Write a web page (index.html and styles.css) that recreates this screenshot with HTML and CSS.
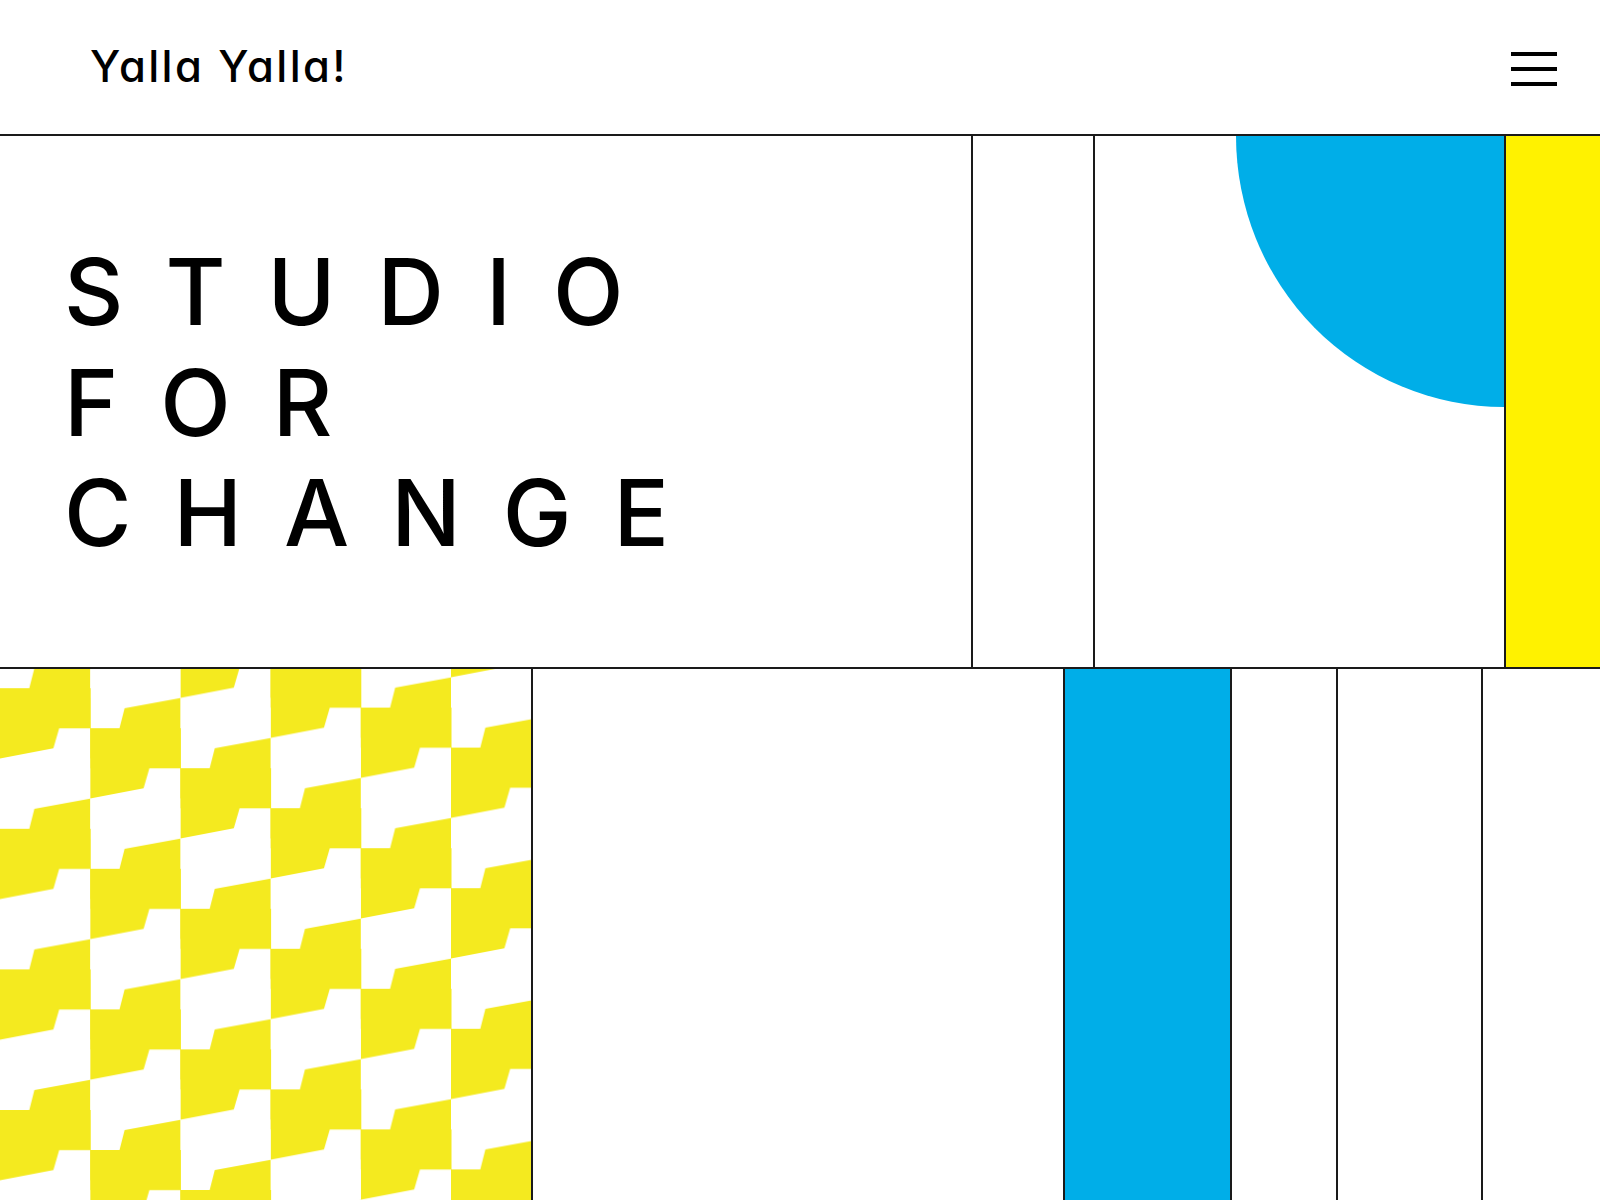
FILE: index.html
```html
<!DOCTYPE html>
<html lang="en">
<head>
<meta charset="utf-8">
<title>Yalla Yalla! — Studio for Change</title>
<link rel="stylesheet" href="styles.css">
</head>
<body>
<header class="topbar">
  <div class="logo">Yalla Yalla!</div>
  <button class="menu" aria-label="Menu"><span></span><span></span><span></span></button>
</header>
<section class="hero">
  <div class="hero-title">
    <h1>STUDIO<br>FOR<br>CHANGE</h1>
  </div>
  <div class="hero-gap"></div>
  <div class="hero-arc"><div class="quarter"></div></div>
  <div class="hero-yellow"></div>
</section>
<section class="lower">
  <div class="pattern">
    <svg class="checks" width="531" height="531" viewBox="0 0 531 531" aria-hidden="true">
      <defs>
        <pattern id="steps" patternUnits="userSpaceOnUse" x="0" y="-15.7" width="90.2" height="140.6">
          <polygon points="0,35 29.3,35 34.4,15 90.2,4.7 90.2,75 59.2,75 53.4,95 0,105.3" fill="#F4EA1F"/>
        </pattern>
      </defs>
      <g transform="translate(0 0)"><rect x="0" y="0" width="90.7" height="531" fill="url(#steps)"/></g>
      <g transform="translate(90.2 40)"><rect x="0" y="-40" width="90.7" height="531" fill="url(#steps)"/></g>
      <g transform="translate(180.4 80)"><rect x="0" y="-80" width="90.7" height="531" fill="url(#steps)"/></g>
      <g transform="translate(270.6 120)"><rect x="0" y="-120" width="90.7" height="531" fill="url(#steps)"/></g>
      <g transform="translate(360.8 160)"><rect x="0" y="-160" width="90.7" height="531" fill="url(#steps)"/></g>
      <g transform="translate(451 200)"><rect x="0" y="-200" width="90.7" height="531" fill="url(#steps)"/></g>
    </svg>
  </div>
  <div class="cell"></div>
  <div class="cell cell-blue"></div>
  <div class="cell"></div>
  <div class="cell"></div>
  <div class="cell cell-last"></div>
</section>
</body>
</html>
```
FILE: styles.css
```css
html, body {
  margin: 0;
  padding: 0;
  background: #ffffff;
}

body {
  width: 1600px;
  height: 1200px;
  overflow: hidden;
  font-family: Inter, "Liberation Sans", sans-serif;
  color: #000;
}

.topbar {
  height: 136px;
  box-sizing: border-box;
  border-bottom: 2px solid #1a1a1a;
  display: flex;
  align-items: center;
  justify-content: space-between;
  padding: 0 43px 0 90px;
}

.logo {
  font-size: 43.5px;
  font-weight: 500;
  line-height: 1;
  letter-spacing: 2.4px;
  font-feature-settings: "cv11" 1;
}

.menu {
  width: 46px;
  margin-top: 4px;
  padding: 0;
  border: 0;
  background: none;
  display: flex;
  flex-direction: column;
  gap: 11px;
}

.menu span {
  display: block;
  height: 4px;
  background: #000;
}

.hero {
  display: grid;
  grid-template-columns: 973px 122px 411px 1fr;
  height: 533px;
  box-sizing: border-box;
  border-bottom: 2px solid #1a1a1a;
}

.hero-title,
.hero-gap,
.hero-arc {
  border-right: 2px solid #1a1a1a;
}

.hero-title {
  padding: 101px 0 0 64px;
}

.hero-title h1 {
  margin: 0;
  font-size: 92px;
  font-weight: 500;
  line-height: 110.5px;
  letter-spacing: 42px;
}

.hero-arc {
  display: flex;
  justify-content: flex-end;
  align-items: flex-start;
}

.quarter {
  width: 268px;
  height: 271px;
  background: #00AEE8;
  border-bottom-left-radius: 100% 100%;
}

.hero-yellow {
  background: #FFF200;
}

.lower {
  display: grid;
  grid-template-columns: 533px 532px 167px 106px 145px 1fr;
  height: 531px;
}

.pattern,
.cell {
  border-right: 2px solid #1a1a1a;
  overflow: hidden;
}

.cell-last {
  border-right: 0;
}

.checks {
  display: block;
}

.cell-blue {
  background: #00AEE8;
}
```
